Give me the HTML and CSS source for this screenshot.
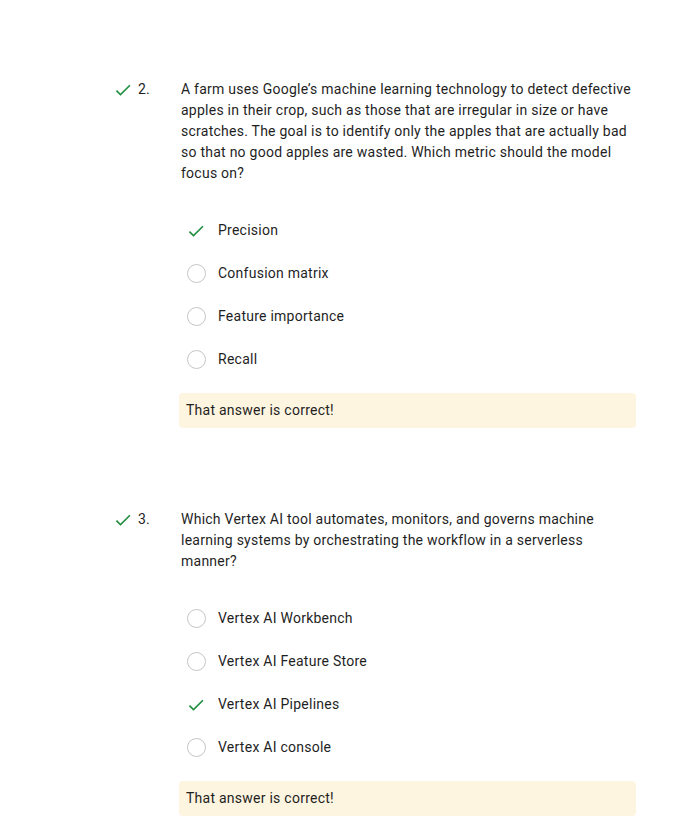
FILE: index.html
```html
<!DOCTYPE html>
<html lang="en">
<head>
<meta charset="utf-8">
<title>Quiz results</title>
<link rel="stylesheet" href="styles.css">
</head>
<body>
<main class="quiz">
  <section class="question">
    <div class="q-head">
      <svg class="q-status" viewBox="0 0 24 24" aria-hidden="true"><path d="M9 16.2L4.8 12l-1.4 1.4L9 19 21 7l-1.4-1.4L9 16.2z"/></svg>
      <span class="q-num">2.</span>
      <p class="q-text">A farm uses Google’s machine learning technology to detect defective apples in their crop, such as those that are irregular in size or have scratches. The goal is to identify only the apples that are actually bad so that no good apples are wasted. Which metric should the model focus on?</p>
    </div>
    <ul class="options">
      <li class="option"><span class="mark"><svg class="check" viewBox="0 0 24 24" aria-hidden="true"><path d="M9 16.2L4.8 12l-1.4 1.4L9 19 21 7l-1.4-1.4L9 16.2z"/></svg></span>Precision</li>
      <li class="option"><span class="mark"><span class="radio"></span></span>Confusion matrix</li>
      <li class="option"><span class="mark"><span class="radio"></span></span>Feature importance</li>
      <li class="option"><span class="mark"><span class="radio"></span></span>Recall</li>
    </ul>
    <div class="feedback">That answer is correct!</div>
  </section>

  <section class="question next">
    <div class="q-head">
      <svg class="q-status" viewBox="0 0 24 24" aria-hidden="true"><path d="M9 16.2L4.8 12l-1.4 1.4L9 19 21 7l-1.4-1.4L9 16.2z"/></svg>
      <span class="q-num">3.</span>
      <p class="q-text">Which Vertex AI tool automates, monitors, and governs machine learning systems by orchestrating the workflow in a serverless manner?</p>
    </div>
    <ul class="options">
      <li class="option"><span class="mark"><span class="radio"></span></span>Vertex AI Workbench</li>
      <li class="option"><span class="mark"><span class="radio"></span></span>Vertex AI Feature Store</li>
      <li class="option"><span class="mark"><svg class="check" viewBox="0 0 24 24" aria-hidden="true"><path d="M9 16.2L4.8 12l-1.4 1.4L9 19 21 7l-1.4-1.4L9 16.2z"/></svg></span>Vertex AI Pipelines</li>
      <li class="option"><span class="mark"><span class="radio"></span></span>Vertex AI console</li>
    </ul>
    <div class="feedback">That answer is correct!</div>
  </section>
</main>
</body>
</html>
```

FILE: styles.css
```css
html, body {
  margin: 0;
  background: #ffffff;
}

body {
  font-family: Roboto, "Liberation Sans", Arial, sans-serif;
  font-size: 14px;
  line-height: 21px;
  letter-spacing: 0.25px;
  color: #1f1f1f;
}

.quiz {
  padding: 79px 55px 0 113px;
}

.question.next {
  margin-top: 81px;
}

.q-head {
  display: flex;
  align-items: flex-start;
}

.q-status {
  flex: 0 0 20px;
  width: 20px;
  height: 20px;
  margin-top: 1px;
  fill: #1e8e3e;
}

.q-num {
  flex: 0 0 43px;
  margin-left: 5px;
}

.q-text {
  margin: 0;
  flex: 1;
}

.options {
  list-style: none;
  margin: 25px 0 0 73px;
  padding: 0;
}

.option {
  display: flex;
  align-items: center;
  gap: 12px;
  height: 43px;
}

.mark {
  flex: 0 0 20px;
  width: 20px;
  height: 20px;
  display: flex;
  align-items: center;
  justify-content: center;
}

.check {
  width: 20px;
  height: 20px;
  fill: #1e8e3e;
}

.radio {
  box-sizing: border-box;
  width: 19px;
  height: 19px;
  border: 1.5px solid #c4c7c5;
  border-radius: 50%;
}

.feedback {
  margin: 12px 0 0 66px;
  padding: 7px;
  background: #fef5e0;
  border-radius: 4px;
}
```
